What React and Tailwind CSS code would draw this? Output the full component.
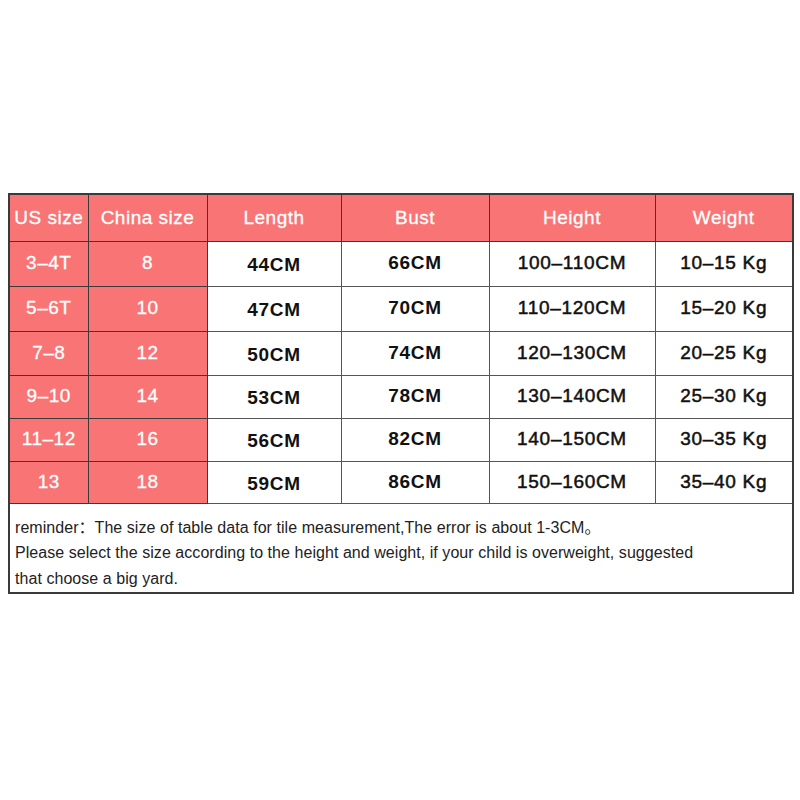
const headers = ['US size', 'China size', 'Length', 'Bust', 'Height', 'Weight']

const rows = [
  { us: '3–4T', cn: '8', length: '44CM', bust: '66CM', height: '100–110CM', weight: '10–15 Kg', h: 'h-[45px]' },
  { us: '5–6T', cn: '10', length: '47CM', bust: '70CM', height: '110–120CM', weight: '15–20 Kg', h: 'h-[45px]' },
  { us: '7–8', cn: '12', length: '50CM', bust: '74CM', height: '120–130CM', weight: '20–25 Kg', h: 'h-[44px]' },
  { us: '9–10', cn: '14', length: '53CM', bust: '78CM', height: '130–140CM', weight: '25–30 Kg', h: 'h-[43px]' },
  { us: '11–12', cn: '16', length: '56CM', bust: '82CM', height: '140–150CM', weight: '30–35 Kg', h: 'h-[43px]' },
  { us: '13', cn: '18', length: '59CM', bust: '86CM', height: '150–160CM', weight: '35–40 Kg', h: 'h-[42px]' },
]

export default function App() {
  return (
    <div className="w-[800px] h-[800px] bg-white px-2 pt-[193px] font-['Liberation_Sans','Noto_Sans_CJK_SC',sans-serif]">
      <table className="w-[784px] table-fixed border-collapse border-2 border-[#3a3a3a]">
        <colgroup>
          <col className="w-[79px]" />
          <col className="w-[119px]" />
          <col className="w-[134px]" />
          <col className="w-[148px]" />
          <col className="w-[166px]" />
          <col className="w-[138px]" />
        </colgroup>
        <thead>
          <tr className="h-[47px] bg-[#f97474]">
            {headers.map(h => (
              <th
                key={h}
                className="border border-[#3a3a3a] text-[19px] font-normal text-white tracking-[0.5px] p-0 [-webkit-text-stroke:0.3px_white]"
              >
                {h}
              </th>
            ))}
          </tr>
        </thead>
        <tbody>
          {rows.map(r => (
            <tr key={r.us} className={r.h}>
              <td className="border border-[#3a3a3a] bg-[#f97474] text-white text-[19px] tracking-[0.5px] text-center p-0 [-webkit-text-stroke:0.3px_white]">
                {r.us}
              </td>
              <td className="border border-[#3a3a3a] bg-[#f97474] text-white text-[19px] tracking-[0.5px] text-center p-0 [-webkit-text-stroke:0.3px_white]">
                {r.cn}
              </td>
              <td className="border border-[#555] text-[#111] text-[19px] font-bold tracking-[0.7px] text-center p-0 pt-1">
                {r.length}
              </td>
              <td className="border border-[#555] text-[#111] text-[19px] font-bold tracking-[0.7px] text-center p-0">
                {r.bust}
              </td>
              <td className="border border-[#555] text-[#111] text-[19px] tracking-[0.7px] text-center p-0 [-webkit-text-stroke:0.5px_#111]">
                {r.height}
              </td>
              <td className="border border-[#555] text-[#111] text-[19px] tracking-[0.7px] text-center p-0 [-webkit-text-stroke:0.5px_#111]">
                {r.weight}
              </td>
            </tr>
          ))}
          <tr className="h-[90px]">
            <td colSpan={6} className="border border-[#3a3a3a] align-top text-left pl-[5px] pt-[11px] text-[16px] tracking-[0.05px] leading-[25.5px] text-[#222]">
              <p>reminder：The size of table data for tile measurement,The error is about 1-3CM。</p>
              <p>Please select the size according to the height and weight, if your child is overweight, suggested</p>
              <p>that choose a big yard.</p>
            </td>
          </tr>
        </tbody>
      </table>
    </div>
  )
}
